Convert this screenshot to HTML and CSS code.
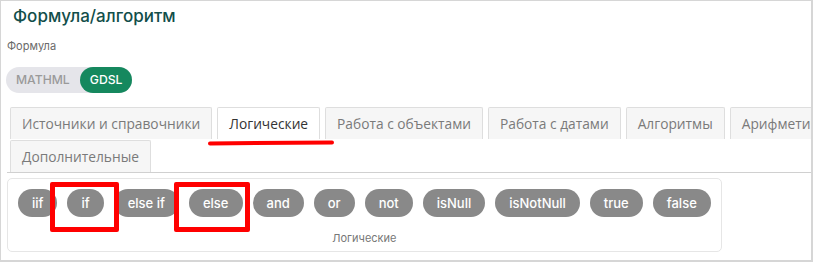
FILE: index.html
```html
<!DOCTYPE html>
<html lang="ru">
<head>
<meta charset="utf-8">
<link rel="stylesheet" href="styles.css">
</head>
<body>
<div class="frame">
  <h1 class="title">Формула/алгоритм</h1>
  <div class="label">Формула</div>
  <div class="toggle">
    <span class="toggle-btn">MATHML</span>
    <span class="toggle-btn active">GDSL</span>
  </div>
  <div class="tabs">
    <div class="tab">Источники и справочники</div>
    <div class="tab active">Логические</div>
    <div class="tab">Работа с объектами</div>
    <div class="tab">Работа с датами</div>
    <div class="tab">Алгоритмы</div>
    <div class="tab">Арифметические</div>
    <div class="tab">Дополнительные</div>
  </div>
  <div class="panel">
    <div class="chips">
      <span class="chip">iif</span>
      <span class="chip">if</span>
      <span class="chip">else if</span>
      <span class="chip">else</span>
      <span class="chip">and</span>
      <span class="chip">or</span>
      <span class="chip">not</span>
      <span class="chip">isNull</span>
      <span class="chip">isNotNull</span>
      <span class="chip">true</span>
      <span class="chip">false</span>
    </div>
    <div class="caption">Логические</div>
  </div>
  <div class="mark-underline"></div>
  <div class="mark-box mark-if"></div>
  <div class="mark-box mark-else"></div>
</div>
</body>
</html>
```

FILE: styles.css
```css
* { box-sizing: border-box; }
html, body { margin: 0; padding: 0; background: #fff; }

.frame {
  position: relative;
  width: 813px;
  height: 262px;
  border-top: 1px solid #d6d6d6;
  border-left: 1px solid #d6d6d6;
  border-right: 2px solid #d6d6d6;
  border-bottom: 2px solid #d6d6d6;
  padding: 0 0 0 6px;
  overflow: hidden;
  font-family: Inter, "Noto Sans", sans-serif;
}

.title {
  margin: 3px 0 0 6px;
  font-size: 17px;
  line-height: 24px;
  font-weight: 500;
  color: #124e4a;
}

.label {
  margin-top: 11px;
  font-size: 11px;
  line-height: 14px;
  color: #6a6a6a;
}

.toggle {
  display: inline-flex;
  margin: 14px 0 0 -1px;
  background: #e5e5ea;
  border-radius: 13px;
}
.toggle-btn {
  height: 26px;
  line-height: 26px;
  padding: 0 10px;
  font-size: 12.2px;
  font-weight: 500;
  color: #9a9a9a;
  border-radius: 13px;
}
.toggle-btn.active {
  background: #15885e;
  color: #fff;
}

.tabs {
  display: flex;
  flex-wrap: wrap;
  column-gap: 5px;
  row-gap: 1px;
  width: 960px;
  margin-top: 14px;
  padding-left: 3px;
  border-bottom: 1px solid #d0d0d0;
}
.tab {
  height: 32px;
  line-height: 32px;
  padding: 0 11px;
  font-family: "Open Sans", "Noto Sans", sans-serif;
  font-size: 13.75px;
  color: #7a7a7a;
  background: #f6f6f6;
  border: 1px solid #dedede;
  border-bottom: none;
  border-radius: 2px 2px 0 0;
  white-space: nowrap;
}
.tab.active {
  background: #fff;
  color: #333;
}

.panel {
  display: inline-flex;
  flex-direction: column;
  margin-top: 5px;
  padding: 10px 10px 6px 10px;
  border: 1px solid #e6e6e6;
  border-radius: 5px;
}
.chips {
  display: flex;
  gap: 10px;
}
.chip {
  height: 28px;
  line-height: 28px;
  padding: 0 14px;
  border-radius: 14px;
  background: #898989;
  color: #fff;
  font-size: 13px;
  font-weight: 500;
  white-space: nowrap;
}
.caption {
  margin-top: 14px;
  text-align: center;
  font-size: 11px;
  line-height: 14px;
  color: #777;
}

.mark-underline {
  position: absolute;
  left: 207px;
  top: 140px;
  width: 126px;
  height: 4px;
  background: #f00;
  border-radius: 3px;
  transform: rotate(-0.4deg);
}
.mark-box {
  position: absolute;
  top: 181px;
  height: 50px;
  border: 5px solid #f00;
  border-radius: 2px;
}
.mark-if { left: 49px; width: 69px; }
.mark-else { left: 173px; width: 76px; }
```
